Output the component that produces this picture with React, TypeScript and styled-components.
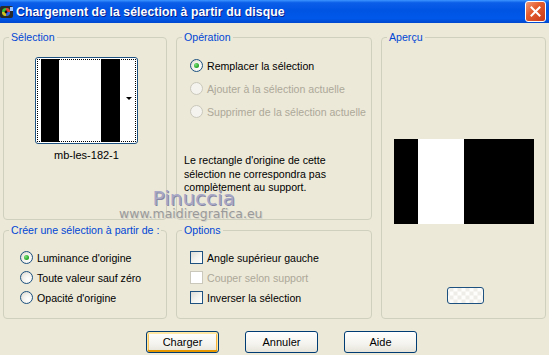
import styled, { createGlobalStyle, css } from "styled-components";

const GlobalStyle = createGlobalStyle`
  html, body {
    margin: 0;
    padding: 0;
    background: #ece9d8;
  }
  body {
    font-family: "Liberation Sans", Arial, sans-serif;
    font-size: 10.6px;
    color: #000;
  }
`;

const Window = styled.div`
  position: relative;
  width: 549px;
  height: 355px;
  background: #ece9d8;
  overflow: hidden;
`;

const TitleBar = styled.div`
  height: 23px;
  display: flex;
  align-items: center;
  background: linear-gradient(
    to bottom,
    #3d95ff 0%,
    #0a5ee8 12%,
    #0054e3 45%,
    #0058ea 80%,
    #0048cf 100%
  );
`;

const TitleIcon = styled.svg`
  width: 14px;
  height: 14px;
  margin: 1px 2px 0 0;
  flex: none;
`;

const TitleText = styled.div`
  flex: 1;
  color: #fff;
  font-weight: bold;
  font-size: 12.2px;
  letter-spacing: 0.1px;
  text-shadow: 1px 1px 0 #0a1e8c;
`;

const CloseButton = styled.div`
  width: 19px;
  height: 19px;
  margin-right: 3px;
  border: 1px solid #fff;
  border-radius: 3px;
  background: linear-gradient(135deg, #f09a7c 0%, #e45c2e 40%, #c8391a 100%);
  display: flex;
  align-items: center;
  justify-content: center;
`;

const Body = styled.div`
  padding: 8px 0 0 3px;
`;

const Grid = styled.div`
  display: grid;
  grid-template-columns: 164px 196px 165px;
  grid-template-rows: 189px 95px;
  column-gap: 9px;
  row-gap: 4px;
`;

const Group = styled.fieldset<{ $span?: boolean }>`
  margin: 0;
  padding: 0;
  min-width: 0;
  border: 1px solid #d0d0bf;
  border-radius: 4px;
  ${(p) =>
    p.$span &&
    css`
      grid-row: 1 / span 2;
      grid-column: 3;
    `}
`;

const Legend = styled.legend`
  margin-left: 5px;
  padding: 0 2px;
  line-height: 13px;
  white-space: nowrap;
  color: #0046d5;
`;

const Content = styled.div<{ $pt: number; $pl?: number; $center?: boolean }>`
  display: flex;
  flex-direction: column;
  align-items: ${(p) => (p.$center ? "center" : "flex-start")};
  padding: ${(p) => p.$pt}px 0 0 ${(p) => (p.$center ? 0 : p.$pl ?? 13)}px;
`;

const ThumbFrame = styled.div`
  position: relative;
  margin-left: 3px;
  width: 99px;
  height: 83px;
  border: 1px solid #1c5180;
  border-radius: 3px;
  background: #fff;
  padding: 1px;
  box-sizing: content-box;
`;

const ThumbDotted = styled.div`
  height: 100%;
  box-sizing: border-box;
  border: 1px dotted #000;
  background: linear-gradient(
    to right,
    #fff 0px,
    #fff 3px,
    #000 3px,
    #000 21px,
    #fff 21px,
    #fff 63px,
    #000 63px,
    #000 82px,
    #fff 82px
  );
`;

const DropArrow = styled.div`
  position: absolute;
  right: 5px;
  top: 39px;
  width: 0;
  height: 0;
  border-left: 3px solid transparent;
  border-right: 3px solid transparent;
  border-top: 3px solid #000;
`;

const ThumbLabel = styled.div`
  margin: 5px 0 0 3px;
  font-size: 11px;
`;

const Row = styled.label<{ $disabled?: boolean; $h: number }>`
  display: flex;
  align-items: center;
  gap: 4px;
  height: ${(p) => p.$h}px;
  white-space: nowrap;
  color: ${(p) => (p.$disabled ? "#aca899" : "#000")};
`;

const Rows = styled.div<{ $gap: number }>`
  display: flex;
  flex-direction: column;
  gap: ${(p) => p.$gap}px;
`;

const Radio = styled.span<{ $checked?: boolean; $disabled?: boolean }>`
  width: 13px;
  height: 13px;
  box-sizing: border-box;
  border-radius: 50%;
  border: 1px solid ${(p) => (p.$disabled ? "#cac8bb" : "#1c5180")};
  background: ${(p) =>
    p.$disabled
      ? "#f4f3ee"
      : "radial-gradient(circle at 65% 65%, #fff 0%, #f3f2ee 45%, #d6d2c4 100%)"};
  display: flex;
  align-items: center;
  justify-content: center;
  flex: none;
  &::after {
    content: "";
    display: ${(p) => (p.$checked ? "block" : "none")};
    width: 5px;
    height: 5px;
    border-radius: 50%;
    background: radial-gradient(circle at 35% 35%, #7be07b 0%, #21a121 70%);
  }
`;

const Check = styled.span<{ $disabled?: boolean }>`
  width: 13px;
  height: 13px;
  box-sizing: border-box;
  border: 1px solid ${(p) => (p.$disabled ? "#cac8bb" : "#1c5180")};
  background: ${(p) =>
    p.$disabled
      ? "#fff"
      : "linear-gradient(135deg, #dcdbd5 0%, #f2f2ee 50%, #fff 100%)"};
  flex: none;
`;

const Note = styled.p`
  margin: 34px 0 0 -6px;
  line-height: 13.5px;
  width: 185px;
`;

const Preview = styled.div`
  margin-top: 95px;
  width: 140px;
  height: 85px;
  background: linear-gradient(
    to right,
    #000 0px,
    #000 24px,
    #fff 24px,
    #fff 70px,
    #000 70px
  );
`;

const SmallButton = styled.div`
  margin: 63px 0 0 3px;
  width: 37px;
  height: 17px;
  box-sizing: border-box;
  border: 1px solid #1c5180;
  border-radius: 3px;
  background:
    repeating-conic-gradient(#fdfdfb 0% 25%, #eeede8 0% 50%) 50% 50% / 8px 8px;
`;

const ButtonBar = styled.div`
  display: flex;
  gap: 26px;
  padding: 12px 0 0 143px;
`;

const Button = styled.button<{ $default?: boolean }>`
  width: 73px;
  height: 22px;
  padding: 0;
  font-family: "Liberation Sans", Arial, sans-serif;
  font-size: 11px;
  color: #000;
  border: 1px solid #003c74;
  border-radius: 3px;
  background: linear-gradient(to bottom, #ffffff 0%, #f4f3ee 60%, #e6e4da 100%);
  ${(p) =>
    p.$default &&
    css`
      box-shadow:
        inset 0 1px 0 1px #ffe7a2,
        inset 0 -1px 0 1px #e59700,
        inset 1px 0 0 1px #fbc761,
        inset -1px 0 0 1px #f5b440;
    `}
`;

const Watermark = styled.div`
  position: absolute;
  left: 119px;
  top: 190px;
  display: flex;
  flex-direction: column;
  align-items: center;
  pointer-events: none;
`;

const WatermarkName = styled.div`
  font-family: "DejaVu Sans", Verdana, sans-serif;
  font-size: 20px;
  line-height: 16px;
  color: #a7a7c6;
  text-shadow: 1px 1px 0 #8686a4;
  margin-left: 6px;
`;

const WatermarkUrl = styled.div`
  font-family: "DejaVu Sans", Verdana, sans-serif;
  font-size: 12.5px;
  line-height: 12px;
  margin-top: 2px;
  color: #9a9a9a;
  text-shadow: 1px 1px 0 #d8d6cc;
`;

export default function App() {
  return (
    <>
      <GlobalStyle />
      <Window>
        <TitleBar>
          <TitleIcon viewBox="0 0 14 14">
            <rect x="0" y="1" width="13" height="12" rx="2" fill="#2a2a2a" />
            <circle cx="6" cy="7" r="4" fill="#3cbf3c" />
            <path d="M6 3 A4 4 0 0 1 10 7 L6 7 Z" fill="#e23a3a" />
            <path d="M10 7 A4 4 0 0 1 6 11 L6 7 Z" fill="#3a5ee2" />
            <path d="M6 11 A4 4 0 0 1 2 7 L6 7 Z" fill="#d8c020" />
            <circle cx="6" cy="7" r="1.4" fill="#111" />
            <rect x="10" y="2" width="3" height="4" fill="#9fc7ff" />
          </TitleIcon>
          <TitleText>Chargement de la sélection à partir du disque</TitleText>
          <CloseButton>
            <svg width="11" height="11" viewBox="0 0 11 11">
              <path
                d="M1.5 1.5 L9.5 9.5 M9.5 1.5 L1.5 9.5"
                stroke="#fff"
                strokeWidth="2"
                strokeLinecap="square"
              />
            </svg>
          </CloseButton>
        </TitleBar>

        <Body>
          <Grid>
            <Group>
              <Legend>Sélection</Legend>
              <Content $pt={13} $center>
                <ThumbFrame>
                  <ThumbDotted />
                  <DropArrow />
                </ThumbFrame>
                <ThumbLabel>mb-les-182-1</ThumbLabel>
              </Content>
            </Group>

            <Group>
              <Legend>Opération</Legend>
              <Content $pt={13}>
                <Rows $gap={6}>
                  <Row $h={17}>
                    <Radio $checked />
                    Remplacer la sélection
                  </Row>
                  <Row $h={17} $disabled>
                    <Radio $disabled />
                    Ajouter à la sélection actuelle
                  </Row>
                  <Row $h={17} $disabled>
                    <Radio $disabled />
                    Supprimer de la sélection actuelle
                  </Row>
                </Rows>
                <Note>
                  Le rectangle d'origine de cette
                  <br />
                  sélection ne correspondra pas
                  <br />
                  complètement au support.
                </Note>
              </Content>
            </Group>

            <Group $span>
              <Legend>Aperçu</Legend>
              <Content $pt={0} $center>
                <Preview />
                <SmallButton />
              </Content>
            </Group>

            <Group>
              <Legend>Créer une sélection à partir de :</Legend>
              <Content $pt={12} $pl={16}>
                <Rows $gap={3}>
                  <Row $h={17}>
                    <Radio $checked />
                    Luminance d'origine
                  </Row>
                  <Row $h={17}>
                    <Radio />
                    Toute valeur sauf zéro
                  </Row>
                  <Row $h={17}>
                    <Radio />
                    Opacité d'origine
                  </Row>
                </Rows>
              </Content>
            </Group>

            <Group>
              <Legend>Options</Legend>
              <Content $pt={12}>
                <Rows $gap={3}>
                  <Row $h={17}>
                    <Check />
                    Angle supérieur gauche
                  </Row>
                  <Row $h={17} $disabled>
                    <Check $disabled />
                    Couper selon support
                  </Row>
                  <Row $h={17}>
                    <Check />
                    Inverser la sélection
                  </Row>
                </Rows>
              </Content>
            </Group>
          </Grid>

          <ButtonBar>
            <Button $default>Charger</Button>
            <Button>Annuler</Button>
            <Button>Aide</Button>
          </ButtonBar>
        </Body>

        <Watermark>
          <WatermarkName>Pinuccia</WatermarkName>
          <WatermarkUrl>www.maidiregrafica.eu</WatermarkUrl>
        </Watermark>
      </Window>
    </>
  );
}
